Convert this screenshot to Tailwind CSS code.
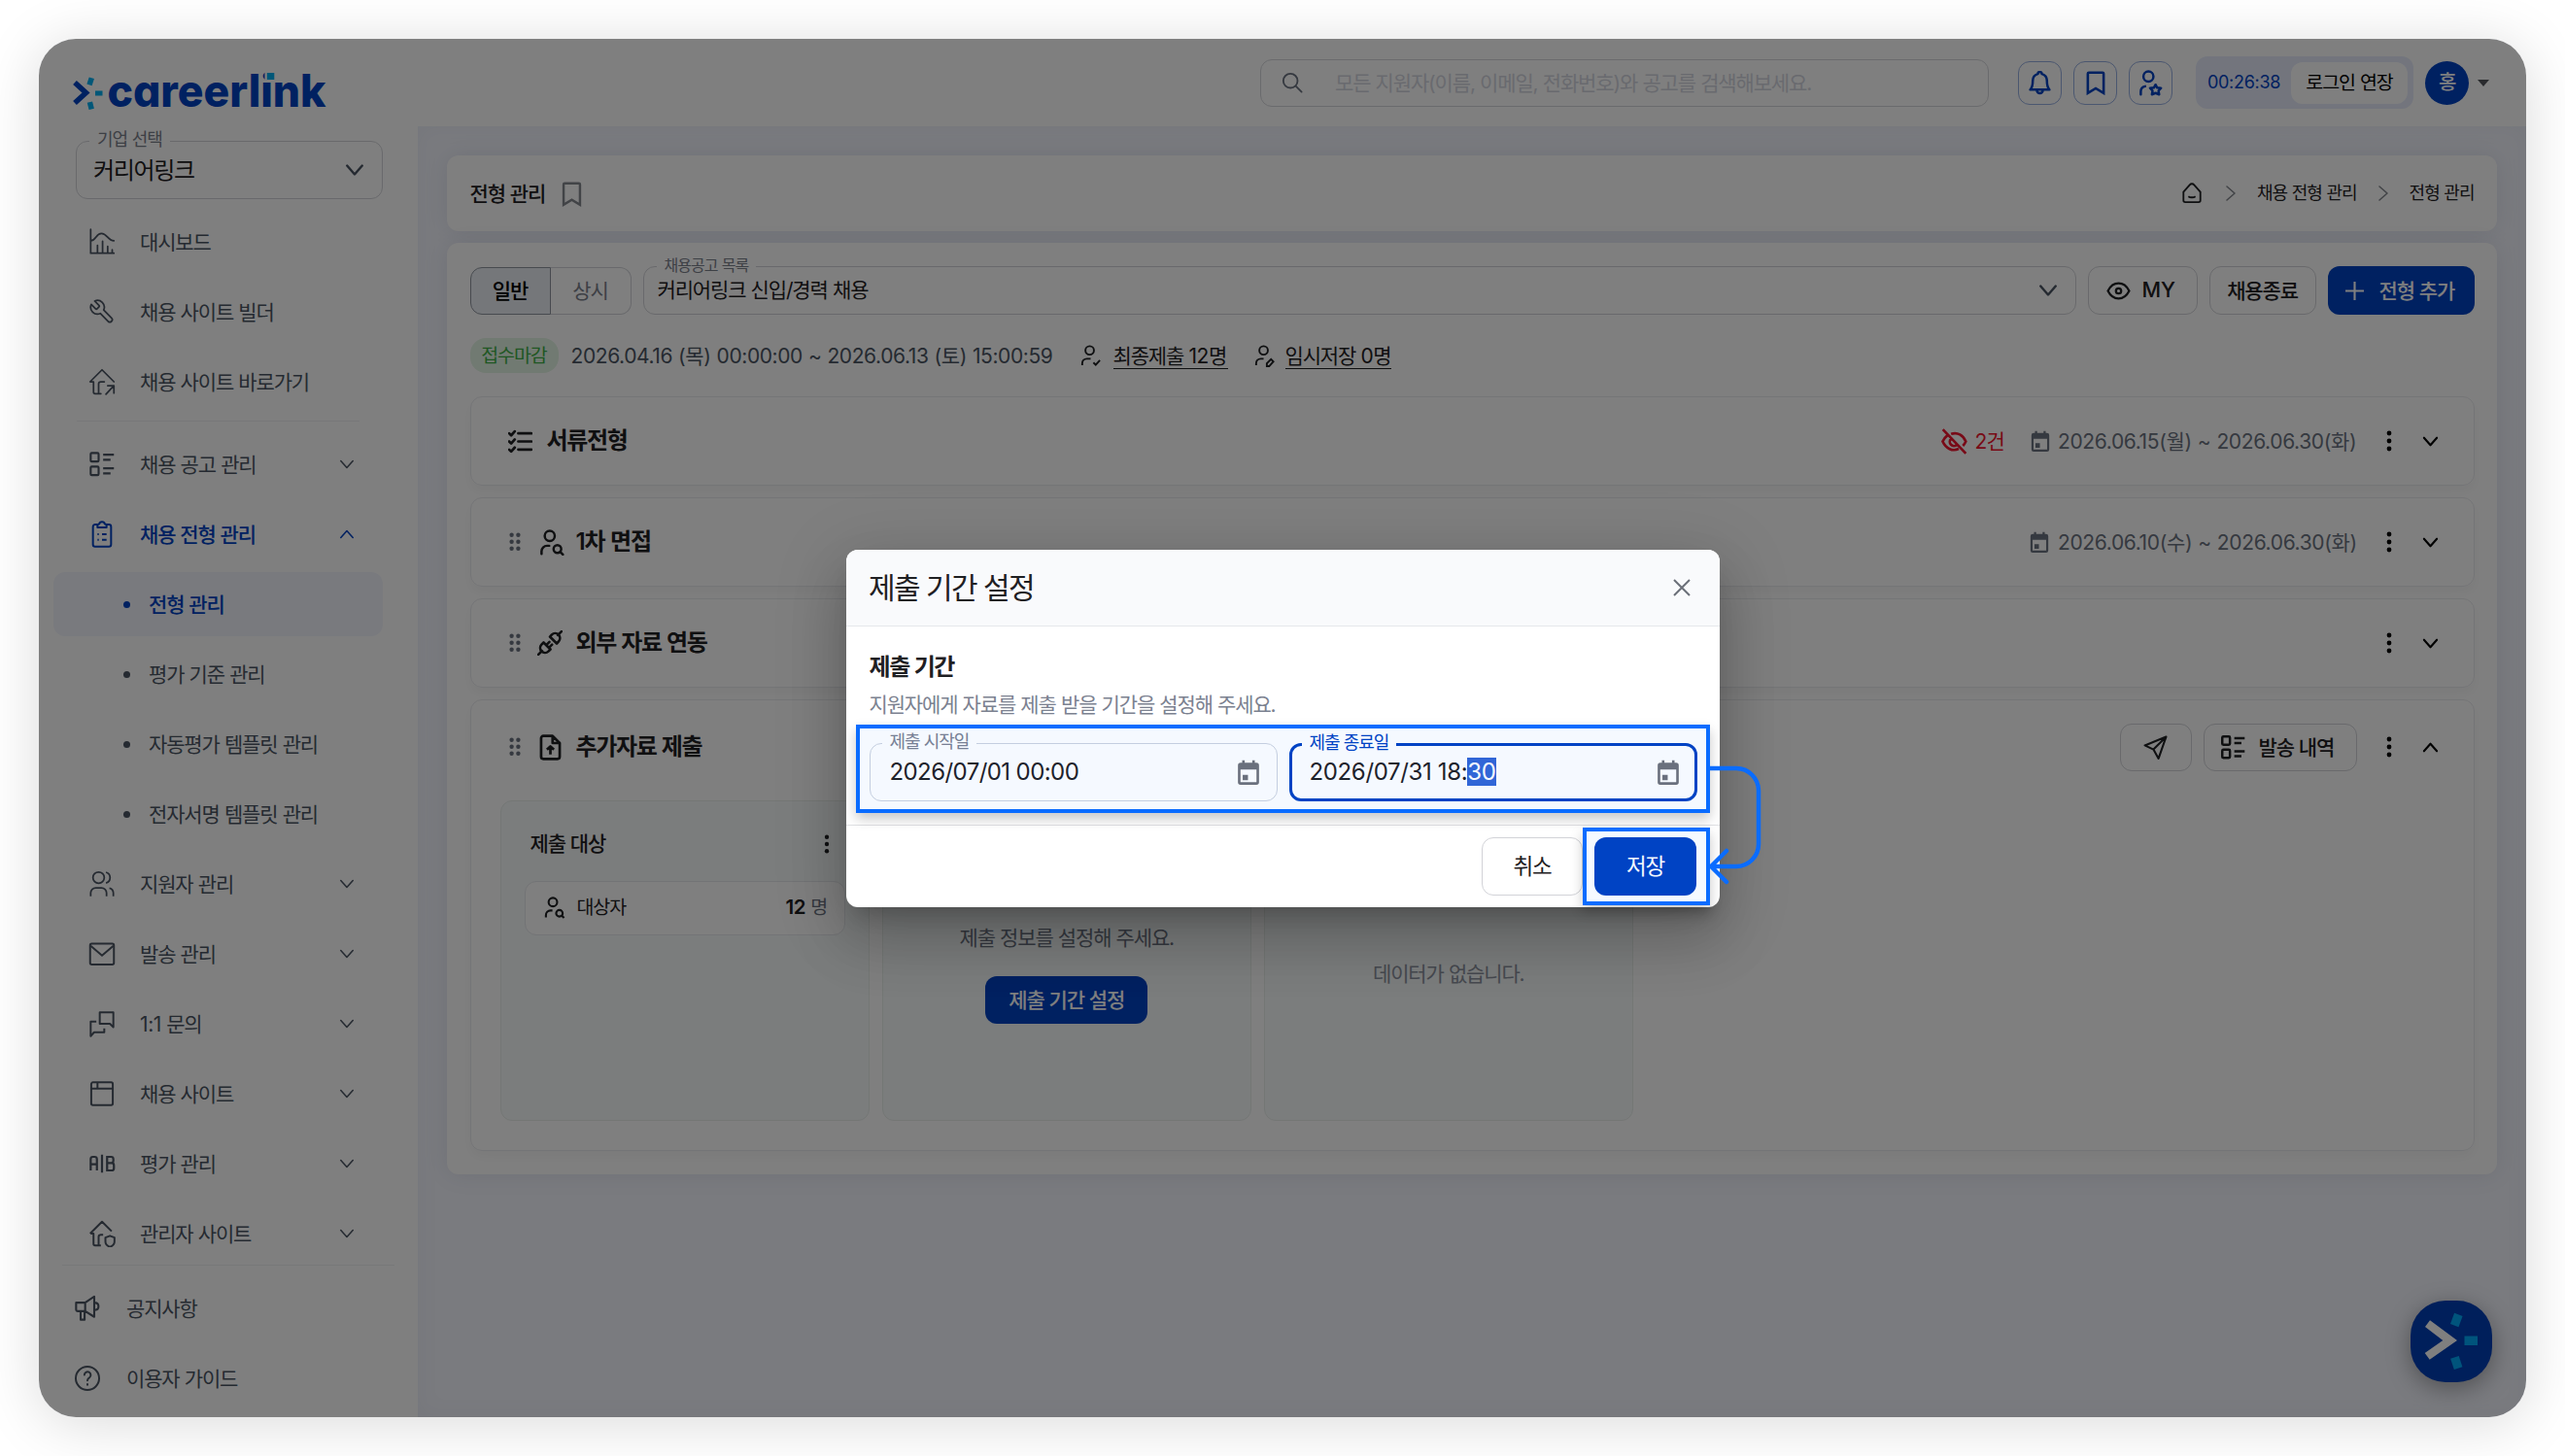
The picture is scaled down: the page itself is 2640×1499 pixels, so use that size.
<!DOCTYPE html>
<html lang="ko">
<head>
<meta charset="utf-8">
<title>careerlink - 전형 관리</title>
<script src="https://cdn.jsdelivr.net/npm/@tailwindcss/browser@4"></script>
</head>
<body class="w-[2640px] h-[1499px] overflow-hidden bg-white p-10 font-['Inter','Noto_Sans_CJK_KR',sans-serif] text-[21px] leading-none tracking-[-1.15px] [word-spacing:0.5px] text-[#1f2023]">

<svg class="hidden">
  <defs>
    <symbol id="chev" viewBox="0 0 18 18"><path d="M2 5l7 8 7-8" fill="none" stroke="currentColor" stroke-linecap="round" stroke-linejoin="round"/></symbol>
    <symbol id="chart" viewBox="0 0 24 24"><path d="M2 1v21h20.500M8 22v-7M12.500 22V11.500M17 22v-6M21 22v-3M2 11c5 0 4.500-6.500 9.500-6.500S17 11 22.500 11"/></symbol>
    <symbol id="wrench" viewBox="0 0 24 24"><path transform="matrix(-1 0 0 1 24 0)" d="M14.700 6.300a1 1 0 0 0 0 1.400l1.600 1.600a1 1 0 0 0 1.400 0l3.770-3.770a6 6 0 0 1-7.940 7.940l-6.910 6.910a2.120 2.120 0 0 1-3-3l6.910-6.910a6 6 0 0 1 7.940-7.940l-3.760 3.760z"/></symbol>
    <symbol id="homego" viewBox="0 0 24 24"><path d="M2 12h2.500v9a1.500 1.500 0 0 0 1.500 1.500h5M1.500 12 12 1.500 22.500 12M9 22v-8a2 2 0 0 1 2-2h3M15.500 23l6.500-7M17 15.500h5.500V22"/></symbol>
    <symbol id="homeshield" viewBox="0 0 24 24"><path d="M2 12h2.500v9a1.500 1.500 0 0 0 1.500 1.500h5M1.500 12 12 1.500 20.500 10M9 22v-7a2 2 0 0 1 2-2h2M19 14l4 1.500v3.500c0 2.500-2 4-4 5-2-1-4-2.500-4-5v-3.500z"/></symbol>
    <symbol id="list" viewBox="0 0 24 24"><rect x="2" y="2" width="7" height="7.500" rx="1"/><rect x="2" y="14" width="7" height="7.500" rx="1"/><path d="M13 3.500h9.500M13 8h6.500M13 15.500h9.500M13 20h6.500"/></symbol>
    <symbol id="clip" viewBox="0 0 24 24"><path d="M8 3.500H6a2 2 0 0 0-2 2V21a2 2 0 0 0 2 2h12a2 2 0 0 0 2-2V5.500a2 2 0 0 0-2-2h-2"/><path d="M8 6h8V4.500a1.500 1.500 0 0 0-1.500-1.500A2.500 2.500 0 0 0 12 1a2.500 2.500 0 0 0-2.500 2A1.500 1.500 0 0 0 8 4.500zM8 12h1.200M12 12h4M8 17h1.200M12 17h4"/></symbol>
    <symbol id="users" viewBox="0 0 24 24"><circle cx="9" cy="6.500" r="5"/><path d="M2 23v-3a4.500 4.500 0 0 1 4.500-4.500h5A4.500 4.500 0 0 1 16 20v3M15.500 1.700a5 5 0 0 1 0 9.600M18.500 15.700a4.500 4.500 0 0 1 3.500 4.300v3"/></symbol>
    <symbol id="mail" viewBox="0 0 24 24"><rect x="1.500" y="3" width="21" height="18.500" rx="1.500"/><path d="M2 5l10 8.500L22 5"/></symbol>
    <symbol id="chat" viewBox="0 0 24 24"><path d="M10 2h12v13l-3-3h-9zM7 10H2v13l3-3.500h9V16"/></symbol>
    <symbol id="win" viewBox="0 0 24 24"><rect x="2.500" y="2" width="19" height="20" rx="1.500"/><path d="M2.500 7.500h19M8 2v5.500"/></symbol>
    <symbol id="ab" viewBox="0 0 24 24"><path d="M2 18V8a2 2 0 0 1 2-2h1.500a2 2 0 0 1 2 2v10M2 12.500h5.500M12 4v16M16.500 6h3.500a2 2 0 0 1 2 2v1.500a2 2 0 0 1-2 2h-3.500zM16.500 11.500h4a2 2 0 0 1 2 2V16a2 2 0 0 1-2 2h-4z"/></symbol>
    <symbol id="mega" viewBox="0 0 24 24"><path d="M2 7h8l8-5.500v18L10 14.500H3.500A1.500 1.500 0 0 1 2 13zM10 7v7.500M6 14.500v7.500h3.500v-7.500M18 7c5 0 5 6.500 0 6.500"/></symbol>
    <symbol id="help" viewBox="0 0 24 24"><circle cx="12" cy="12" r="10.300"/><path d="M9.300 9a2.800 2.800 0 1 1 4.500 2.300c-1 .8-1.800 1.200-1.800 2.700M12 17.200v.6"/></symbol>
    <symbol id="usearch" viewBox="0 0 24 24"><circle cx="10.500" cy="6" r="4.600"/><path d="M3 22.500v-2.500a5 5 0 0 1 5-5h2"/><circle cx="17.500" cy="18" r="3.500"/><path d="M20 20.500l2.500 2.500"/></symbol>
    <symbol id="ucheck" viewBox="0 0 24 24"><circle cx="11" cy="6" r="4.600"/><path d="M3 22v-2a5 5 0 0 1 5-5h4M15 19l2.500 2.500 4.500-5"/></symbol>
    <symbol id="uedit" viewBox="0 0 24 24"><circle cx="11" cy="6" r="4.600"/><path d="M3 22v-2a5 5 0 0 1 5-5h3M14.500 23v-3l4.500-4.500 2.500 2.500-4.500 5z"/></symbol>
    <symbol id="ustar" viewBox="0 0 24 24"><circle cx="10" cy="6" r="4.600"/><path d="M3 22.500v-2.500a5 5 0 0 1 4-5M16.500 13.500l1.500 2.800 3.500.3-2.300 2.500.6 3.400-3.300-1.400-3.300 1.400.6-3.400-2.300-2.500 3.500-.3z"/></symbol>
    <symbol id="bell" viewBox="0 0 24 24"><path d="M2.500 18.500h19c-2-2-2.500-4.500-2.500-9a7 7 0 0 0-5-6.500 2 2 0 0 0-4 0 7 7 0 0 0-5 6.500c0 4.500-.5 7-2.500 9zM9 19a3 3 0 0 0 6 0"/></symbol>
    <symbol id="bm" viewBox="0 0 24 24"><path d="M4.500 3.500a1 1 0 0 1 1-1h13a1 1 0 0 1 1 1V22L12 17.500 4.500 22z"/></symbol>
    <symbol id="eye" viewBox="0 0 24 24"><path d="M1.500 12C4 7 8 4.500 12 4.500S20 7 22.500 12C20 17 16 19.500 12 19.500S4 17 1.500 12z"/><circle cx="12" cy="12" r="2.600"/></symbol>
    <symbol id="eyeoff" viewBox="0 0 24 24"><path d="M9 5.200C15 3 20 6.500 22.500 12c-.7 1.500-1.600 2.900-2.700 4M5.500 6.500C3.700 7.900 2.300 9.800 1.300 12c3 6.500 9 9.500 14.700 6.700M9 9.500a3.800 3.800 0 0 0 5.300 5.500M1.500 1l21 22"/></symbol>
    <symbol id="cal" viewBox="0 0 24 24"><path fill="currentColor" stroke="none" fill-rule="evenodd" d="M4.500 3H6V.8h2.400V3h7.200V.8H18V3h1.500A2.500 2.500 0 0 1 22 5.500v16a2.500 2.500 0 0 1-2.500 2.500h-15A2.500 2.500 0 0 1 2 21.500v-16A2.500 2.500 0 0 1 4.500 3zM4.400 9.500v12h15.200v-12zM6.500 14.500h5v5h-5z"/></symbol>
    <symbol id="checks" viewBox="0 0 24 24"><path d="M1 4l2 2 3.500-4M1 12l2 2 3.500-4M1 20l2 2 3.500-4M10 4h13M10 12h13M10 20h13"/></symbol>
    <symbol id="plug" viewBox="0 0 24 24"><path d="M19.500 4.500L23 1M1 23l3.500-3.500M6 11.500l6.500 6.500-2 2a4.600 4.600 0 0 1-6.500-6.500zM12 6l6.500 6.500 1.800-2A4.600 4.600 0 0 0 13.800 4zM9 13.500l2.500-2.500M11.500 16l2.500-2.500"/></symbol>
    <symbol id="fileup" viewBox="0 0 24 24"><path d="M14 1.500H5.500A2 2 0 0 0 3.500 3.500v17a2 2 0 0 0 2 2h13a2 2 0 0 0 2-2V8zM14 1.500V8h6.500M12 18.500v-7M8.800 14L12 11l3.200 3"/></symbol>
    <symbol id="send" viewBox="0 0 24 24"><path d="M22.500 1.500L1.500 10l8.500 4 5 9zM22.500 1.500L10 14"/></symbol>
    <symbol id="grip" viewBox="0 0 12 20"><g fill="currentColor" stroke="none"><circle cx="2.600" cy="2.800" r="2.200"/><circle cx="9.400" cy="2.800" r="2.200"/><circle cx="2.600" cy="9.800" r="2.200"/><circle cx="9.400" cy="9.800" r="2.200"/><circle cx="2.600" cy="16.800" r="2.200"/><circle cx="9.400" cy="16.800" r="2.200"/></g></symbol>
    <symbol id="dots" viewBox="0 0 6 22"><g fill="currentColor" stroke="none"><circle cx="3" cy="3" r="2.400"/><circle cx="3" cy="11" r="2.400"/><circle cx="3" cy="19" r="2.400"/></g></symbol>
    <symbol id="home" viewBox="0 0 24 24"><path d="M2.500 10.500L9.500 2.500a3.300 3.300 0 0 1 5 0l7 8V20a2 2 0 0 1-2 2h-15a2 2 0 0 1-2-2zM8 15.500c2 1.500 6 1.500 8 0"/></symbol>
  </defs>
</svg>

<div class="relative w-[2560px] h-[1419px] rounded-[38px] overflow-hidden bg-[#f4f6fe] flex flex-col shadow-[0_6px_60px_rgba(0,0,0,0.15)]">

  <!-- Top bar -->
  <header class="h-[90px] shrink-0 bg-white flex items-center justify-between pl-[34px] pr-[38px]">
    <svg class="w-[264px] h-[62px] mt-[19px] overflow-visible" viewBox="0 0 264 62">
      <path d="M3 21L14.500 31.500L3 42" fill="none" stroke="#0042c2" stroke-width="5.500"/>
      <g fill="#00aef0">
        <rect x="16.500" y="16" width="5.500" height="7.500" transform="rotate(18 19 19.500)"/>
        <rect x="24" y="29.500" width="7.500" height="5"/>
        <rect x="16.500" y="41" width="5.500" height="7.500" transform="rotate(-14 19 44.500)"/>
      </g>
      <text class="[font-feature-settings:'cv11']" x="36.500" y="45.500" font-family="Inter" font-weight="800" font-size="46" fill="#0042c2" letter-spacing="0" textLength="225" lengthAdjust="spacingAndGlyphs">careerlink</text>
      <rect x="198.500" y="7" width="12.500" height="11" fill="#fff"/>
      <rect x="200.800" y="11" width="7.500" height="7" fill="#00aef0"/>
    </svg>
    <div class="flex items-center">
      <div class="w-[750px] h-[49px] border-[1.5px] border-[#d5d6da] rounded-xl flex items-center pl-[21px] text-[#d3d5de] mr-[30px]">
        <svg class="size-[22px] text-[#6b7280] mr-[33px]" viewBox="0 0 24 24" fill="none" stroke="currentColor" stroke-width="2" stroke-linecap="round"><circle cx="10" cy="10" r="8"/><path d="M16 16l6.500 6.500"/></svg>
        <span>모든 지원자(이름, 이메일, 전화번호)와 공고를 검색해보세요.</span>
      </div>
      <div class="flex gap-3 text-[#0042c2]">
        <div class="size-[45px] rounded-xl border-[1.5px] border-[#96aee0] flex items-center justify-center"><svg class="size-[25px] fill-none stroke-current stroke-[2.4] [stroke-linejoin:round]"><use href="#bell"/></svg></div>
        <div class="size-[45px] rounded-xl border-[1.5px] border-[#96aee0] flex items-center justify-center"><svg class="size-[26px] fill-none stroke-current stroke-[2.4]"><use href="#bm"/></svg></div>
        <div class="size-[45px] rounded-xl border-[1.5px] border-[#96aee0] flex items-center justify-center"><svg class="size-[27px] fill-none stroke-current stroke-[2.2] [stroke-linejoin:round] [stroke-linecap:round]"><use href="#ustar"/></svg></div>
      </div>
      <div class="ml-6 h-[54px] w-[224px] rounded-xl bg-[#e6ebfb] flex items-center justify-between pl-3 pr-1.5">
        <span class="text-[18px] tracking-[-0.3px] text-[#0042c2]">00:26:38</span>
        <span class="w-[120px] h-[43px] rounded-xl bg-white flex items-center justify-center text-[19.5px] tracking-[-1.05px] text-black pt-px">로그인 연장</span>
      </div>
      <div class="ml-3 size-[45px] rounded-full bg-[#0042c2] text-white font-medium text-[20px] flex items-center justify-center">홍</div>
      <svg class="ml-[9px] w-3 h-[7px]" viewBox="0 0 12 7"><path d="M0 0h12L6 7z" fill="#55575c"/></svg>
    </div>
  </header>

  <div class="flex flex-1 min-h-0">
    <!-- Side navigation -->
    <aside class="w-[390px] shrink-0 bg-white text-[#4b5563] flex flex-col">
      <div class="relative mt-[15px] ml-[38px] w-[316px] h-[60px] rounded-xl border-[1.5px] border-[#d2d3d8] flex items-center justify-between pl-[17px] pr-[18px]">
        <span class="absolute left-[13px] top-[-11px] bg-white px-2 text-[18px] tracking-[-1px] text-[#7b808b]">기업 선택</span>
        <span class="text-[24px] tracking-[-1.32px] text-[#1f2023] pt-0.5">커리어링크</span>
        <svg class="size-5 stroke-[2.2]"><use href="#chev"/></svg>
      </div>
      <nav class="mt-2 flex flex-col">
        <a class="h-[72px] flex items-center pl-[51px]"><svg class="size-7 mr-[25px] fill-none stroke-current stroke-[1.5] [stroke-linecap:round] [stroke-linejoin:round]"><use href="#chart"/></svg>대시보드</a>
        <a class="h-[72px] flex items-center pl-[51px]"><svg class="size-7 mr-[25px] fill-none stroke-current stroke-[1.5] [stroke-linecap:round] [stroke-linejoin:round]"><use href="#wrench"/></svg>채용 사이트 빌더</a>
        <a class="h-[72px] flex items-center pl-[51px]"><svg class="size-7 mr-[25px] fill-none stroke-current stroke-[1.5] [stroke-linecap:round] [stroke-linejoin:round]"><use href="#homego"/></svg>채용 사이트 바로가기</a>
        <div class="h-[13px] pt-[4px] pl-[39px]"><div class="w-[291px] h-px bg-[#eff0f2]"></div></div>
        <a class="h-[72px] flex items-center pl-[51px] pr-[65px]"><svg class="size-7 mr-[25px] fill-none stroke-current stroke-[1.8]"><use href="#list"/></svg>채용 공고 관리<svg class="size-4 ml-auto stroke-[1.7]"><use href="#chev"/></svg></a>
        <a class="h-[72px] flex items-center pl-[51px] pr-[65px] text-[#0042c2] font-medium"><svg class="size-7 mr-[25px] fill-none stroke-current stroke-[1.7] [stroke-linejoin:round]"><use href="#clip"/></svg>채용 전형 관리<svg class="size-4 ml-auto stroke-[1.7] rotate-180"><use href="#chev"/></svg></a>
        <a class="h-[66px] my-[3px] ml-[15px] w-[339px] rounded-xl bg-[#f3f5fd] flex items-center pl-[72px] text-[#0042c2] font-medium"><i class="size-[7px] rounded-full bg-current mr-[19px]"></i>전형 관리</a>
        <a class="h-[72px] flex items-center pl-[87px]"><i class="size-[7px] rounded-full bg-current mr-[19px]"></i>평가 기준 관리</a>
        <a class="h-[72px] flex items-center pl-[87px]"><i class="size-[7px] rounded-full bg-current mr-[19px]"></i>자동평가 템플릿 관리</a>
        <a class="h-[72px] flex items-center pl-[87px]"><i class="size-[7px] rounded-full bg-current mr-[19px]"></i>전자서명 템플릿 관리</a>
        <a class="h-[72px] flex items-center pl-[51px] pr-[65px]"><svg class="size-7 mr-[25px] fill-none stroke-current stroke-[1.5]"><use href="#users"/></svg>지원자 관리<svg class="size-4 ml-auto stroke-[1.7]"><use href="#chev"/></svg></a>
        <a class="h-[72px] flex items-center pl-[51px] pr-[65px]"><svg class="size-7 mr-[25px] fill-none stroke-current stroke-[1.7]"><use href="#mail"/></svg>발송 관리<svg class="size-4 ml-auto stroke-[1.7]"><use href="#chev"/></svg></a>
        <a class="h-[72px] flex items-center pl-[51px] pr-[65px]"><svg class="size-7 mr-[25px] fill-none stroke-current stroke-[1.7] [stroke-linejoin:round]"><use href="#chat"/></svg><span><span class="tracking-[-0.4px]">1:1</span> 문의</span><svg class="size-4 ml-auto stroke-[1.7]"><use href="#chev"/></svg></a>
        <a class="h-[72px] flex items-center pl-[51px] pr-[65px]"><svg class="size-7 mr-[25px] fill-none stroke-current stroke-[1.7]"><use href="#win"/></svg>채용 사이트<svg class="size-4 ml-auto stroke-[1.7]"><use href="#chev"/></svg></a>
        <a class="h-[72px] flex items-center pl-[51px] pr-[65px]"><svg class="size-7 mr-[25px] fill-none stroke-current stroke-[1.9]"><use href="#ab"/></svg>평가 관리<svg class="size-4 ml-auto stroke-[1.7]"><use href="#chev"/></svg></a>
        <a class="h-[72px] flex items-center pl-[51px] pr-[65px]"><svg class="size-7 mr-[25px] fill-none stroke-current stroke-[1.7] [stroke-linejoin:round]"><use href="#homeshield"/></svg>관리자 사이트<svg class="size-4 ml-auto stroke-[1.7]"><use href="#chev"/></svg></a>
      </nav>
      <div class="-mt-1 ml-6 w-[342px] h-px shrink-0 bg-[#eff0f2]"></div>
      <a class="mt-[8px] h-[72px] shrink-0 flex items-center pl-[36px]"><svg class="size-7 mr-[26px] fill-none stroke-current stroke-[1.8] [stroke-linejoin:round]"><use href="#mega"/></svg>공지사항</a>
      <a class="h-[72px] shrink-0 flex items-center pl-[36px]"><svg class="size-7 mr-[26px] fill-none stroke-current stroke-[1.7] [stroke-linecap:round]"><use href="#help"/></svg>이용자 가이드</a>
    </aside>

    <!-- Content -->
    <main class="flex-1 pt-[30px] px-[30px] flex flex-col gap-3 shadow-[inset_0_0_24px_rgba(90,100,140,0.06)]">
      <section class="h-[78px] shrink-0 bg-white rounded-xl shadow-[0_0_24px_rgba(40,50,90,0.1)] flex items-center justify-between px-[23.500px]">
        <div class="flex items-center font-medium">전형 관리<svg class="size-[27px] ml-[14px] fill-none stroke-[#85888f] stroke-[2.2]"><use href="#bm"/></svg></div>
        <div class="flex items-center text-[18px] tracking-[-0.98px]">
          <svg class="size-[22px] mr-[20px] fill-none stroke-current stroke-[2]"><use href="#home"/></svg>
          <svg class="size-[18px] mr-[18px] -rotate-90 stroke-[1.6] text-[#85888f]"><use href="#chev"/></svg>
          <span>채용 전형 관리</span>
          <svg class="size-[18px] mx-[18px] -rotate-90 stroke-[1.6] text-[#85888f]"><use href="#chev"/></svg>
          <span>전형 관리</span>
        </div>
      </section>

      <section class="h-[959px] shrink-0 bg-white rounded-xl shadow-[0_0_24px_rgba(40,50,90,0.1)] pt-6 px-[23.5px]">
        <div class="flex items-center gap-3">
          <div class="flex h-[49px] w-[166px]">
            <div class="w-[83px] rounded-l-xl border-[1.5px] border-[#8f959e] bg-[#eaeff5] flex items-center justify-center font-medium text-black">일반</div>
            <div class="flex-1 rounded-r-xl border-[1.5px] border-l-0 border-[#d2d3d8] flex items-center justify-center text-[#7b808b]">상시</div>
          </div>
          <div class="relative flex-1 h-[50px] rounded-xl border-[1.5px] border-[#d2d3d8] flex items-center justify-between pl-[14px] pr-[18px]">
            <span class="absolute left-[13px] top-[-10px] bg-white px-2 text-[16px] tracking-[-0.95px] text-[#7b808b]">채용공고 목록</span>
            <span class="pb-px">커리어링크 신입/경력 채용</span>
            <svg class="size-5 stroke-[2.2] text-[#4b5563]"><use href="#chev"/></svg>
          </div>
          <div class="w-[113px] h-[50px] rounded-xl border-[1.5px] border-[#d2d3d8] flex items-center pl-[18px] tracking-normal"><svg class="size-[25px] mr-[12px] fill-none stroke-current stroke-[2.200]"><use href="#eye"/></svg><span class="text-[21.5px] font-medium">MY</span></div>
          <div class="w-[110px] h-[50px] rounded-xl border-[1.5px] border-[#d2d3d8] flex items-center justify-center font-medium">채용종료</div>
          <div class="w-[151px] h-[50px] rounded-xl bg-[#0042c2] text-white flex items-center pl-[18px] font-medium"><svg class="size-[19px] mr-[16px]" viewBox="0 0 18 18" fill="none" stroke="currentColor" stroke-width="2"><path d="M9 0v18M0 9h18"/></svg>전형 추가</div>
        </div>

        <div class="mt-6 h-9 flex items-center whitespace-nowrap">
          <span class="h-9 w-[91px] rounded-2xl bg-[#e3f4e4] text-[#3fae46] flex items-center justify-center text-[19.5px] tracking-[-1.07px] pt-px mr-[13px]">접수마감</span>
          <span class="w-[498px] tracking-[-0.4px] text-[#4b5563]">2026.04.16 (목) 00:00:00 ~ 2026.06.13 (토) 15:00:59</span>
          <svg class="size-[23px] ml-[25px] mr-[12px] fill-none stroke-current stroke-[2]"><use href="#ucheck"/></svg>
          <span class="border-b-[1.5px] pb-[2px] mt-[3px] w-[118px]">최종제출 <span class="tracking-[-0.4px]">12</span>명</span>
          <svg class="size-[23px] ml-[26px] mr-[10px] fill-none stroke-current stroke-[2]"><use href="#uedit"/></svg>
          <span class="border-b-[1.5px] pb-[2px] mt-[3px] w-[109px]">임시저장 <span class="tracking-[-0.4px]">0</span>명</span>
        </div>

        <div class="mt-6 flex flex-col gap-3">
          <article class="h-[92px] rounded-xl border-[1.5px] border-[#e9eaee] shadow-[0_6px_12px_rgba(0,0,0,0.04)] flex items-center pl-[38px] pr-[36px]">
            <svg class="size-[25px] mr-[15px] fill-none stroke-current stroke-[2.6] [stroke-linecap:round] [stroke-linejoin:round]"><use href="#checks"/></svg>
            <h3 class="text-[24px] tracking-[-1.32px] font-semibold">서류전형</h3>
            <div class="ml-auto flex items-center text-[#6b7280]">
              <svg class="size-[27px] mr-[7px] text-[#f0142f] fill-none stroke-current stroke-[2.4]"><use href="#eyeoff"/></svg><span class="text-[#f0142f] mr-[26px] tracking-[-0.8px]">2건</span>
              <svg class="size-[22px] mr-[7px]"><use href="#cal"/></svg><span class="w-[306px] tracking-[-0.36px] whitespace-nowrap">2026.06.15(월) ~ 2026.06.30(화)</span>
              <svg class="w-1.5 h-[22px] ml-[31.500px] text-black"><use href="#dots"/></svg>
              <svg class="size-[17px] ml-[31px] stroke-[2.200] text-black"><use href="#chev"/></svg>
            </div>
          </article>
          <article class="h-[92px] rounded-xl border-[1.5px] border-[#e9eaee] shadow-[0_6px_12px_rgba(0,0,0,0.04)] flex items-center pl-[39px] pr-[36px]">
            <svg class="w-3 h-5 mr-[18px] text-[#6b7280]"><use href="#grip"/></svg>
            <svg class="size-[27px] mr-[12px] fill-none stroke-current stroke-[2.2] [stroke-linecap:round]"><use href="#usearch"/></svg>
            <h3 class="text-[24px] tracking-[-1.1px] font-semibold">1차 면접</h3>
            <div class="ml-auto flex items-center text-[#6b7280]">
              <svg class="size-[22px] mr-[8px]"><use href="#cal"/></svg><span class="w-[306px] tracking-[-0.36px] whitespace-nowrap">2026.06.10(수) ~ 2026.06.30(화)</span>
              <svg class="w-1.5 h-[22px] ml-[31.500px] text-black"><use href="#dots"/></svg>
              <svg class="size-[17px] ml-[31px] stroke-[2.200] text-black"><use href="#chev"/></svg>
            </div>
          </article>
          <article class="h-[92px] rounded-xl border-[1.5px] border-[#e9eaee] shadow-[0_6px_12px_rgba(0,0,0,0.04)] flex items-center pl-[39px] pr-[36px]">
            <svg class="w-3 h-5 mr-[17px] text-[#6b7280]"><use href="#grip"/></svg>
            <svg class="size-[26px] mr-[14px] fill-none stroke-current stroke-[2.4] [stroke-linecap:round] [stroke-linejoin:round]"><use href="#plug"/></svg>
            <h3 class="text-[24px] tracking-[-1.32px] font-semibold">외부 자료 연동</h3>
            <div class="ml-auto flex items-center">
              <svg class="w-1.5 h-[22px] text-black"><use href="#dots"/></svg>
              <svg class="size-[17px] ml-[31px] stroke-[2.200] text-black"><use href="#chev"/></svg>
            </div>
          </article>
          <article class="h-[465px] rounded-xl border-[1.5px] border-[#e9eaee] shadow-[0_6px_12px_rgba(0,0,0,0.04)]">
            <div class="h-[96px] flex items-center pl-[39px] pr-[36px]">
              <svg class="w-3 h-5 mr-[17px] text-[#6b7280]"><use href="#grip"/></svg>
              <svg class="size-[27px] mr-[13px] fill-none stroke-current stroke-[2.4] [stroke-linejoin:round]"><use href="#fileup"/></svg>
              <h3 class="text-[24px] tracking-[-1.32px] font-semibold">추가자료 제출</h3>
              <div class="ml-auto flex items-center">
                <div class="w-[74px] h-[49px] rounded-xl border-[1.5px] border-[#d2d3d8] flex items-center justify-center mr-3"><svg class="size-[25px] fill-none stroke-current stroke-[2] [stroke-linejoin:round]"><use href="#send"/></svg></div>
                <div class="w-[158px] h-[49px] rounded-xl border-[1.5px] border-[#d2d3d8] flex items-center pl-[16px] font-medium"><svg class="size-[27px] mr-[13px] fill-none stroke-current stroke-[2.2]"><use href="#list"/></svg>발송 내역</div>
                <svg class="w-1.5 h-[22px] ml-[30px] text-black"><use href="#dots"/></svg>
                <svg class="size-[17px] ml-[31px] stroke-[2.200] rotate-180 text-black"><use href="#chev"/></svg>
              </div>
            </div>
            <div class="mt-[6.500px] ml-[30px] flex gap-[12.500px]">
              <div class="w-[380.500px] h-[330px] rounded-xl border-[1.5px] border-[#e8eeeb] bg-[#f7fafa] px-[24px] pt-[30px]">
                <div class="h-[28px] flex items-center justify-between pl-[6px] pr-[16px] font-medium">제출 대상<svg class="w-1.5 h-5"><use href="#dots"/></svg></div>
                <div class="mt-[24px] h-[56px] rounded-xl border-[1.5px] border-[#e6e8ec] bg-white flex items-center px-[18px] text-[19.5px] tracking-[-1.07px]">
                  <svg class="size-[23px] mr-[12px] fill-none stroke-current stroke-[2.200]"><use href="#usearch"/></svg><span class="pt-px">대상자</span>
                  <b class="ml-auto font-semibold tracking-[-0.4px] text-[20.5px]">12</b><span class="ml-[5px] text-[#6b7280]">명</span>
                </div>
              </div>
              <div class="w-[380.500px] h-[330px] rounded-xl border-[1.5px] border-[#e8eeeb] bg-[#f7fafa] flex flex-col items-center pt-[130px]">
                <p class="text-[#6b7280]">제출 정보를 설정해 주세요.</p>
                <div class="mt-[29px] w-[167px] h-[49px] rounded-xl bg-[#0042c2] text-white font-medium flex items-center justify-center">제출 기간 설정</div>
              </div>
              <div class="w-[380.500px] h-[330px] rounded-xl border-[1.5px] border-[#e8eeeb] bg-[#f7fafa] flex justify-center pt-[167px] text-[#8d93a0]">데이터가 없습니다.</div>
            </div>
          </article>
        </div>
      </section>
    </main>
  </div>

  <!-- Chat launcher -->
  <div class="absolute left-[2441px] top-[1299px] size-[84px] rounded-[36px] bg-[#003fb6] shadow-[0_6px_24px_rgba(0,0,0,0.35)]">
    <svg class="size-[84px]" viewBox="0 0 84 84">
      <path d="M20 20.300L15 27l18.300 14L14.700 54l5 6.700L48 41z" fill="#fff"/>
      <g fill="#00a8f8">
        <rect x="42.800" y="14" width="9" height="12" transform="rotate(20 47.300 20)"/>
        <rect x="55.500" y="36.500" width="13.500" height="9.500"/>
        <rect x="42.800" y="58" width="9" height="12" transform="rotate(-18 47.300 64)"/>
      </g>
    </svg>
  </div>

  <div class="absolute inset-0 bg-black/50"></div>

  <!-- Submission period dialog -->
  <div class="absolute left-[831px] top-[526px] w-[899px] h-[368px] rounded-xl bg-white flex flex-col shadow-[0_16px_22px_-10px_rgba(0,0,0,0.2),0_36px_57px_4px_rgba(0,0,0,0.14),0_14px_69px_12px_rgba(0,0,0,0.12)]">
    <div class="h-[79px] shrink-0 rounded-t-xl bg-[#f9fafc] border-b-[1.5px] border-[#e5e7eb] flex items-center justify-between pl-[23px] pr-[30px]">
      <h2 class="text-[30px] tracking-[-1.7px]">제출 기간 설정</h2>
      <svg class="size-[18px]" viewBox="0 0 18 18" fill="none" stroke="#6b6f78" stroke-width="2"><path d="M1 1l16 16M17 1L1 17"/></svg>
    </div>
    <div class="h-[205px] shrink-0 border-b-[1.5px] border-[#e0e1e4] px-[23.500px] pt-[30px]">
      <h3 class="text-[24px] tracking-[-1.4px] font-bold">제출 기간</h3>
      <p class="mt-[16px] text-[#7b8190]">지원자에게 자료를 제출 받을 기간을 설정해 주세요.</p>
      <div class="mt-[29px] flex gap-3 text-[24px] tracking-[-0.58px] [word-spacing:0px]">
        <div class="relative flex-1 h-[60px] rounded-xl border-[1.5px] border-[#cdd3df] bg-white flex items-center justify-between pl-[20px] pr-[16px]">
          <span class="absolute left-[12px] top-[-11px] bg-white px-2 text-[18px] tracking-[-1px] text-[#7b8190]">제출 시작일</span>
          2026/07/01 00:00
          <svg class="size-[26px] text-[#6f7178]"><use href="#cal"/></svg>
        </div>
        <div class="relative flex-1 h-[60px] rounded-xl border-[3px] border-[#0042c2] bg-white flex items-center justify-between pl-[18px] pr-[14px]">
          <span class="absolute left-[10px] top-[-12px] bg-white px-2 text-[18px] tracking-[-1px] text-[#0042c2]">제출 종료일</span>
          <span class="tracking-[-0.35px]">2026/07/31 18:<span class="bg-[#3367d6] text-white">30</span></span>
          <svg class="size-[26px] text-[#6f7178]"><use href="#cal"/></svg>
        </div>
      </div>
    </div>
    <div class="flex-1 flex justify-end pr-6 pt-[12px] gap-3 text-[22.500px] tracking-[-1.23px]">
      <div class="w-[104px] h-[60px] rounded-xl border-[1.5px] border-[#d2d3d8] flex items-center justify-center">취소</div>
      <div class="w-[105px] h-[60px] rounded-xl bg-[#0042c2] text-white flex items-center justify-center">저장</div>
    </div>
  </div>

  <!-- Guide annotations -->
  <div class="absolute left-[841px] top-[706px] w-[879px] h-[90.500px] border-[4.5px] border-[#0a6cff] bg-[#0a6cff]/4 shadow-[0_6px_12px_rgba(0,0,0,0.22)]"></div>
  <div class="absolute left-[1589px] top-[812px] w-[131px] h-[80px] border-[4.5px] border-[#0a6cff] bg-[#0a6cff]/4 shadow-[0_6px_12px_rgba(0,0,0,0.22)]"></div>
  <svg class="absolute left-[1716px] top-[740px] w-[62px] h-[140px]" viewBox="0 0 62 140" fill="none" stroke="#0a6cff" stroke-width="4.500" stroke-linecap="round" stroke-linejoin="round"><path d="M3 11h28a23 23 0 0 1 23 23v55a23 23 0 0 1-23 23H5M21 96L5 112l16 16"/></svg>
</div>
</body>
</html>
